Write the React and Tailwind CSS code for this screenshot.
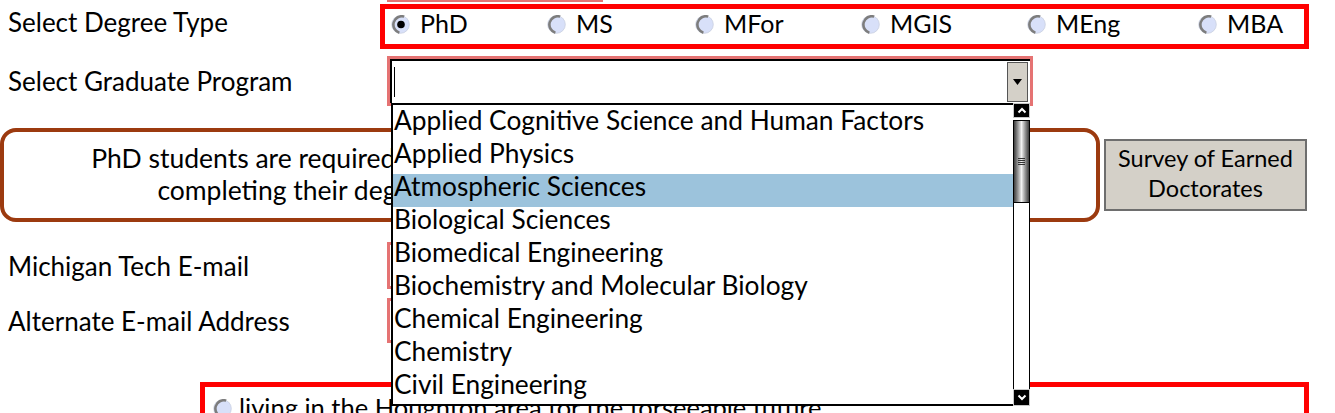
import React from 'react';

const degrees = [
  { label: 'PhD', w: 'w-[156px]', checked: true },
  { label: 'MS', w: 'w-[148px]' },
  { label: 'MFor', w: 'w-[166px]' },
  { label: 'MGIS', w: 'w-[166px]' },
  { label: 'MEng', w: 'w-[171px]' },
  { label: 'MBA', w: 'w-[90px]' },
];

const programs = [
  'Applied Cognitive Science and Human Factors',
  'Applied Physics',
  'Atmospheric Sciences',
  'Biological Sciences',
  'Biomedical Engineering',
  'Biochemistry and Molecular Biology',
  'Chemical Engineering',
  'Chemistry',
  'Civil Engineering',
];

function Radio({ checked, className = '' }) {
  return (
    <svg width="19" height="19" viewBox="0 0 19 19" className={`shrink-0 ${className}`}>
      <circle cx="9.5" cy="9.5" r="8.8" fill="#d8e0f9" stroke="#c9cfe0" strokeWidth="0.8" />
      <path d="M13.2 1.6 A8.2 8.2 0 0 0 8.4 17.7" stroke="#7d7d7d" strokeWidth="2.6" fill="none" />
      {checked && <circle cx="10" cy="9.5" r="3.8" fill="#000" />}
    </svg>
  );
}

function Chevron({ up }) {
  return (
    <svg width="10" height="7" viewBox="0 0 10 7">
      <polyline
        points={up ? '1.5,5.5 5,2 8.5,5.5' : '1.5,1.5 5,5 8.5,1.5'}
        stroke="#fff"
        strokeWidth="2"
        fill="none"
      />
    </svg>
  );
}

function ScrollBar() {
  return (
    <div className="flex w-[17px] flex-col">
      {/* up arrow */}
      <div className="flex h-[15px] items-center justify-center border border-[#c8c8c8] bg-black">
        <Chevron up />
      </div>
      {/* thumb */}
      <div className="mt-[2px] flex h-[83px] items-center justify-center border border-black bg-linear-to-r from-[#3f3f3f] via-[#f2f2f2] to-[#3f3f3f]">
        <div className="flex w-[7px] flex-col gap-px">
          <div className="h-px bg-[#333]" />
          <div className="h-px bg-[#333]" />
          <div className="h-px bg-[#333]" />
          <div className="h-px bg-[#333]" />
        </div>
      </div>
      {/* track */}
      <div className="flex-1 border-x border-black bg-white" />
      {/* down arrow */}
      <div className="flex h-[17px] items-center justify-center border border-[#c8c8c8] bg-black">
        <Chevron />
      </div>
    </div>
  );
}

export default function App() {
  return (
    <div className="relative h-[413px] w-[1335px] overflow-hidden bg-white font-['Lato',sans-serif] text-black">
      {/* bottom edge of the field above */}
      <div className="ml-[387px] h-[2px] w-[216px] bg-[#e57373]" />

      {/* degree type */}
      <div className="mt-[2px] flex items-center">
        <div className="w-[380px] pb-[10px] pl-2 text-[26px] leading-none">Select Degree Type</div>
        <div className="flex h-[45px] w-[929px] items-center border-[5px] border-[#ff0000] pl-[6px]">
          {degrees.map((d) => (
            <div key={d.label} className={`flex items-center gap-[10px] ${d.w}`}>
              <Radio checked={d.checked} className="mb-[4px]" />
              <span className="pb-[6px] text-[25px] leading-none">{d.label}</span>
            </div>
          ))}
        </div>
      </div>

      {/* graduate program */}
      <div className="mt-[7px] flex items-center">
        <div className="w-[387px] pl-2 text-[26px] leading-none">Select Graduate Program</div>
        <div className="h-[50px] w-[646px] border-[3px] border-[#e57373] bg-white">
          <div className="flex h-full items-center justify-between border-l-2 border-t-2 border-black pl-[2px] pr-[2px]">
            <div className="h-[30px] w-px bg-black" />
            <div className="flex h-[40px] w-[21px] items-center justify-center border border-[#555] bg-[#d4d0c8]">
              <svg width="9" height="6" viewBox="0 0 9 6">
                <polygon points="0,0 9,0 4.5,6" fill="#000" />
              </svg>
            </div>
          </div>
        </div>
      </div>

      {/* notice + survey button */}
      <div className="mt-[22px] flex items-center gap-[4px]">
        <div className="flex h-[94px] w-[1100px] flex-col justify-center rounded-[16px] border-4 border-[#9c3a0f] pb-[3px] text-center text-[26.5px] leading-[32px]">
          <p>PhD students are required to complete the Survey of Earned Doctorates before</p>
          <p>completing their degree. Please use the button to the right to begin.</p>
        </div>
        <button className="h-[72px] w-[203px] border-2 border-[#6e6e6e] bg-[#d4d0c8] pb-[5px] text-[23.5px] leading-[30px]">
          Survey of Earned
          <br />
          Doctorates
        </button>
      </div>

      {/* e-mail fields */}
      <div className="mt-[20px] flex items-center">
        <div className="w-[387px] pl-2 text-[26px] leading-none">Michigan Tech E-mail</div>
        <div className="h-[47px] w-[600px] border-[3px] border-[#e57373]" />
      </div>
      <div className="mt-[9px] flex items-center">
        <div className="w-[387px] pl-2 text-[26px] leading-none">Alternate E-mail Address</div>
        <div className="h-[45px] w-[600px] border-[3px] border-[#e57373]" />
      </div>

      {/* residency question */}
      <div className="ml-[200px] mt-[39px] flex h-[40px] w-[1109px] items-start gap-[7px] border-[5px] border-b-0 border-[#ff0000] pl-[8px] pt-[9px]">
        <Radio className="mt-[3px]" />
        <span className="text-[25.5px] leading-[22px]">living in the Houghton area for the forseeable future.</span>
      </div>

      {/* open program list */}
      <div className="absolute left-[391px] top-[103px] flex h-[303px] w-[639px]">
        <div className="flex-1 overflow-hidden border-2 border-r-0 border-black bg-white pt-[3px]">
          {programs.map((p) => (
            <div
              key={p}
              className={`flex h-[33px] items-center pb-[9px] pl-px text-[26.3px] leading-none ${
                p === 'Atmospheric Sciences' ? 'bg-[#9cc3dc]' : ''
              }`}
            >
              {p}
            </div>
          ))}
        </div>
        <ScrollBar />
      </div>
    </div>
  );
}
